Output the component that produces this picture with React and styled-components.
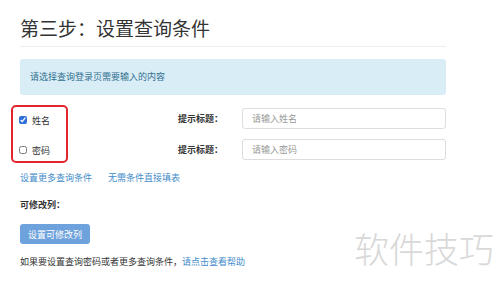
import React from 'react'
import styled, {createGlobalStyle} from 'styled-components'

const GlobalStyle = createGlobalStyle`
    body {
        margin: 0;
        background: #fff;
        font-family: "Noto Sans CJK SC", "Noto Sans", sans-serif;
        color: #333;
    }
`

const Page = styled.div`
    position: relative;
    width: 500px;
    height: 285px;
    overflow: hidden;
    padding: 0 54px 0 20px;
    box-sizing: border-box;
`

const Header = styled.div`
    margin-top: 15px;
    padding-bottom: 5px;
    border-bottom: 1px solid #eee;
`

const Title = styled.h1`
    margin: 0;
    font-size: 19px;
    line-height: 26px;
    font-weight: 400;
    color: #333;
`

const Alert = styled.div`
    margin-top: 12px;
    height: 36px;
    line-height: 36px;
    padding: 0 10px;
    font-size: 9px;
    color: #31708f;
    background: #d9edf7;
    border-radius: 3px;
`

const Fields = styled.div`
    display: flex;
    align-items: center;
    margin-top: 10px;
`

const CheckColumn = styled.div`
    display: flex;
    flex-direction: column;
    gap: 10px;
    width: 53px;
    margin-left: -9px;
    padding: 3px 0 1px 6px;
    box-sizing: content-box;
    border: 2px solid #e3262d;
    border-radius: 5px;
`

const CheckItem = styled.label`
    display: flex;
    align-items: center;
    gap: 5px;
    height: 20px;
    font-size: 9px;
    color: #333;
`

const Box = styled.input`
    width: 8px;
    height: 8px;
    margin: 0;
    accent-color: #2e6fd8;
`

const HintColumn = styled.div`
    display: flex;
    flex-direction: column;
    gap: 10px;
    margin-left: 110px;
    flex: 1;
`

const HintRow = styled.div`
    display: flex;
    align-items: center;
`

const HintLabel = styled.span`
    width: 64px;
    font-size: 9px;
    font-weight: 700;
    color: #333;
`

const TextInput = styled.input`
    width: 204px;
    height: 21px;
    box-sizing: border-box;
    padding: 0 9px;
    border: 1px solid #ddd;
    border-radius: 3px;
    font-family: inherit;
    font-size: 9px;
    color: #555;
    outline: none;

    &::placeholder {
        color: #999;
    }
`

const LinkRow = styled.div`
    display: flex;
    gap: 16px;
    margin-top: 8px;
    line-height: 14px;
`

const Link = styled.a`
    font-size: 9px;
    color: #428bca;
    text-decoration: none;
`

const SubTitle = styled.div`
    margin-top: 13px;
    font-size: 9px;
    line-height: 14px;
    font-weight: 700;
`

const Button = styled.button`
    display: block;
    margin-top: 12px;
    width: 70px;
    height: 20px;
    border: none;
    border-radius: 3px;
    background: #6ea2dc;
    color: #fff;
    font-family: inherit;
    font-size: 9px;
    padding: 0;
`

const Note = styled.p`
    margin: 11px 0 0;
    font-size: 9px;
    line-height: 14px;
    color: #333;
`

const Watermark = styled.div`
    position: absolute;
    right: 6px;
    bottom: 17px;
    font-size: 35px;
    line-height: 40px;
    font-weight: 300;
    color: #d8d8d8;
`

const App = () => {
    return (
        <Page>
            <GlobalStyle/>
            <Header>
                <Title>第三步：设置查询条件</Title>
            </Header>
            <Alert>请选择查询登录页需要输入的内容</Alert>
            <Fields>
                <CheckColumn>
                    <CheckItem><Box type="checkbox" defaultChecked/>姓名</CheckItem>
                    <CheckItem><Box type="checkbox"/>密码</CheckItem>
                </CheckColumn>
                <HintColumn>
                    <HintRow>
                        <HintLabel>提示标题：</HintLabel>
                        <TextInput placeholder="请输入姓名"/>
                    </HintRow>
                    <HintRow>
                        <HintLabel>提示标题：</HintLabel>
                        <TextInput placeholder="请输入密码"/>
                    </HintRow>
                </HintColumn>
            </Fields>
            <LinkRow>
                <Link href="#">设置更多查询条件</Link>
                <Link href="#">无需条件直接填表</Link>
            </LinkRow>
            <SubTitle>可修改列：</SubTitle>
            <Button>设置可修改列</Button>
            <Note>如果要设置查询密码或者更多查询条件，<Link href="#">请点击查看帮助</Link></Note>
            <Watermark>软件技巧</Watermark>
        </Page>
    )
}

export default App
